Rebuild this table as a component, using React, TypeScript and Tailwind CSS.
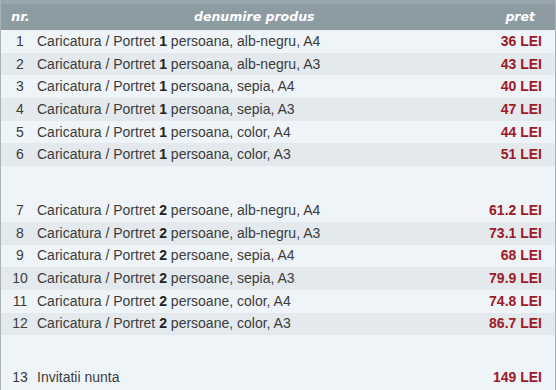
type Item = { nr: number; pre: string; bold: string; post: string; price: string }

const group1: Item[] = [
  { nr: 1, pre: "Caricatura / Portret ", bold: "1", post: " persoana, alb-negru, A4", price: "36 LEI" },
  { nr: 2, pre: "Caricatura / Portret ", bold: "1", post: " persoana, alb-negru, A3", price: "43 LEI" },
  { nr: 3, pre: "Caricatura / Portret ", bold: "1", post: " persoana, sepia, A4", price: "40 LEI" },
  { nr: 4, pre: "Caricatura / Portret ", bold: "1", post: " persoana, sepia, A3", price: "47 LEI" },
  { nr: 5, pre: "Caricatura / Portret ", bold: "1", post: " persoana, color, A4", price: "44 LEI" },
  { nr: 6, pre: "Caricatura / Portret ", bold: "1", post: " persoana, color, A3", price: "51 LEI" },
]

const group2: Item[] = [
  { nr: 7, pre: "Caricatura / Portret ", bold: "2", post: " persoane, alb-negru, A4", price: "61.2 LEI" },
  { nr: 8, pre: "Caricatura / Portret ", bold: "2", post: " persoane, alb-negru, A3", price: "73.1 LEI" },
  { nr: 9, pre: "Caricatura / Portret ", bold: "2", post: " persoane, sepia, A4", price: "68 LEI" },
  { nr: 10, pre: "Caricatura / Portret ", bold: "2", post: " persoane, sepia, A3", price: "79.9 LEI" },
  { nr: 11, pre: "Caricatura / Portret ", bold: "2", post: " persoane, color, A4", price: "74.8 LEI" },
  { nr: 12, pre: "Caricatura / Portret ", bold: "2", post: " persoane, color, A3", price: "86.7 LEI" },
]

const Row = ({ item, dark }: { item: Item; dark: boolean }) => (
  <div className={`flex items-center h-[22.7px] ${dark ? "bg-[#e3e9ec]" : "bg-[#eef4f7]"}`}>
    <div className="w-[36px] text-center pl-[2px]">{item.nr}</div>
    <div className="flex-1">
      {item.pre}
      <b className="text-[#222]">{item.bold}</b>
      {item.post}
    </div>
    <div className="pr-[13px] font-bold text-[#9e1a24]">{item.price}</div>
  </div>
)

const App = () => {
  return (
    <div className="w-[556px] h-[390px] overflow-hidden bg-[#eef4f7] border-x border-[#a9b3b8] text-[14px] text-[#3c3c3c] font-['Liberation_Sans',Arial,sans-serif]">
      {/* header */}
      <div className="h-[30px] flex items-center bg-[#8d9ca3] border-t-[4px] border-[#98a7ae] text-white font-bold italic text-[12.5px] font-['DejaVu_Sans',Verdana,sans-serif]">
        <div className="w-[36px] pl-[10px] text-[13px]">nr.</div>
        <div className="flex-1 text-center pr-[34px]">denumire produs</div>
        <div className="pr-[20px]">pret</div>
      </div>

      {group1.map((it, i) => (
        <Row key={it.nr} item={it} dark={i % 2 === 1} />
      ))}
      <div className="h-[33px]" />
      {group2.map((it, i) => (
        <Row key={it.nr} item={it} dark={i % 2 === 1} />
      ))}
      <div className="h-[31px]" />
      <Row item={{ nr: 13, pre: "Invitatii nunta", bold: "", post: "", price: "149 LEI" }} dark={false} />
    </div>
  )
}

export default App
